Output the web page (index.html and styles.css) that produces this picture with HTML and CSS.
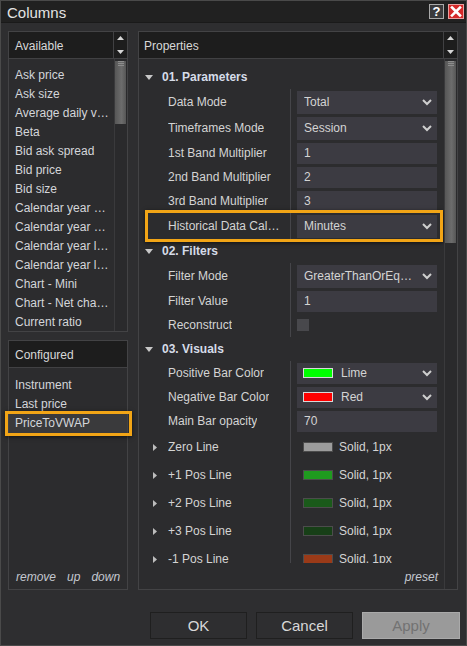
FILE: index.html
```html
<!DOCTYPE html>
<html lang="en">
<head>
  <meta charset="UTF-8">
  <title>Columns</title>
  <link rel="stylesheet" href="styles.css">
</head>
<body>
  <div class="window">
    <div class="titlebar">
      <span class="title">Columns</span>
      <div class="title-buttons">
        <span class="tb help">?</span>
        <span class="tb close">
          <svg width="14" height="13" viewBox="0 0 14 13"><path d="M3 2.5l8 8M11 2.5l-8 8" stroke="#fff" stroke-width="2.6" stroke-linecap="square"/></svg>
        </span>
      </div>
    </div>

    <div class="main">
      <div class="left">
        <div class="panel available">
          <div class="panel-head">
            <span>Available</span>
            <div class="head-arrows">
              <svg width="13" height="27" viewBox="0 0 13 27"><path d="M3 8h7l-3.5-4zM3 18h7l-3.5 4z" fill="#d6d6d6"/></svg>
            </div>
          </div>
          <div class="panel-body">
            <ul class="list">
              <li>Ask price</li>
              <li>Ask size</li>
              <li>Average daily volume</li>
              <li>Beta</li>
              <li>Bid ask spread</li>
              <li>Bid price</li>
              <li>Bid size</li>
              <li>Calendar year high</li>
              <li>Calendar year high date</li>
              <li>Calendar year low</li>
              <li>Calendar year low date</li>
              <li>Chart - Mini</li>
              <li>Chart - Net change</li>
              <li>Current ratio</li>
              <li>Daily high</li>
            </ul>
            <div class="vscroll"><div class="thumb short"></div></div>
          </div>
        </div>

        <div class="panel configured">
          <div class="panel-head"><span>Configured</span></div>
          <div class="panel-body column">
            <ul class="list">
              <li>Instrument</li>
              <li>Last price</li>
              <li class="selected">PriceToVWAP</li>
            </ul>
            <div class="panel-foot">
              <span>remove</span><span>up</span><span>down</span>
            </div>
          </div>
        </div>
      </div>

      <div class="panel properties">
        <div class="panel-head">
          <span>Properties</span>
          <div class="head-arrows">
            <svg width="13" height="27" viewBox="0 0 13 27"><path d="M3 8h7l-3.5-4zM3 18h7l-3.5 4z" fill="#d6d6d6"/></svg>
          </div>
        </div>
        <div class="panel-body">
          <div class="prop-main">
            <div class="grid">
              <div class="cat"><svg class="tri-down" width="8" height="5" viewBox="0 0 8 5"><path d="M0 0h8L4 5z"/></svg>01. Parameters</div>
              <div class="row tall"><div class="label"><span>Data Mode</span></div><div class="value"><div class="field"><span class="text">Total</span><svg class="chev" width="10" height="7" viewBox="0 0 10 7"><path d="M1 1l4 4 4-4"/></svg></div></div></div>
              <div class="row tall"><div class="label"><span>Timeframes Mode</span></div><div class="value"><div class="field"><span class="text">Session</span><svg class="chev" width="10" height="7" viewBox="0 0 10 7"><path d="M1 1l4 4 4-4"/></svg></div></div></div>
              <div class="row"><div class="label"><span>1st Band Multiplier</span></div><div class="value"><div class="field"><span class="text">1</span></div></div></div>
              <div class="row"><div class="label"><span>2nd Band Multiplier</span></div><div class="value"><div class="field"><span class="text">2</span></div></div></div>
              <div class="row"><div class="label"><span>3rd Band Multiplier</span></div><div class="value"><div class="field"><span class="text">3</span></div></div></div>
              <div class="row tall marked"><div class="label"><span>Historical Data Calculation</span></div><div class="value"><div class="field"><span class="text">Minutes</span><svg class="chev" width="10" height="7" viewBox="0 0 10 7"><path d="M1 1l4 4 4-4"/></svg></div></div></div>

              <div class="cat"><svg class="tri-down" width="8" height="5" viewBox="0 0 8 5"><path d="M0 0h8L4 5z"/></svg>02. Filters</div>
              <div class="row tall"><div class="label"><span>Filter Mode</span></div><div class="value"><div class="field"><span class="text">GreaterThanOrEqual</span><svg class="chev" width="10" height="7" viewBox="0 0 10 7"><path d="M1 1l4 4 4-4"/></svg></div></div></div>
              <div class="row"><div class="label"><span>Filter Value</span></div><div class="value"><div class="field"><span class="text">1</span></div></div></div>
              <div class="row"><div class="label"><span>Reconstruct</span></div><div class="value"><span class="check"></span></div></div>

              <div class="cat"><svg class="tri-down" width="8" height="5" viewBox="0 0 8 5"><path d="M0 0h8L4 5z"/></svg>03. Visuals</div>
              <div class="row"><div class="label"><span>Positive Bar Color</span></div><div class="value"><div class="field color"><span class="swatch" style="background:#00ff00"></span><span class="text">Lime</span><svg class="chev" width="10" height="7" viewBox="0 0 10 7"><path d="M1 1l4 4 4-4"/></svg></div></div></div>
              <div class="row"><div class="label"><span>Negative Bar Color</span></div><div class="value"><div class="field color"><span class="swatch" style="background:#ff0000"></span><span class="text">Red</span><svg class="chev" width="10" height="7" viewBox="0 0 10 7"><path d="M1 1l4 4 4-4"/></svg></div></div></div>
              <div class="row"><div class="label"><span>Main Bar opacity</span></div><div class="value"><div class="field"><span class="text">70</span></div></div></div>

              <div class="row line"><div class="label"><svg class="tri-right" width="4" height="7" viewBox="0 0 4 7"><path d="M0 0l4 3.5L0 7z"/></svg><span>Zero Line</span></div><div class="value"><span class="swatch" style="background:#9c9c9c"></span><span class="text">Solid, 1px</span></div></div>
              <div class="row line"><div class="label"><svg class="tri-right" width="4" height="7" viewBox="0 0 4 7"><path d="M0 0l4 3.5L0 7z"/></svg><span>+1 Pos Line</span></div><div class="value"><span class="swatch" style="background:#1f9a1f"></span><span class="text">Solid, 1px</span></div></div>
              <div class="row line"><div class="label"><svg class="tri-right" width="4" height="7" viewBox="0 0 4 7"><path d="M0 0l4 3.5L0 7z"/></svg><span>+2 Pos Line</span></div><div class="value"><span class="swatch" style="background:#1a5a1a"></span><span class="text">Solid, 1px</span></div></div>
              <div class="row line"><div class="label"><svg class="tri-right" width="4" height="7" viewBox="0 0 4 7"><path d="M0 0l4 3.5L0 7z"/></svg><span>+3 Pos Line</span></div><div class="value"><span class="swatch" style="background:#173f17"></span><span class="text">Solid, 1px</span></div></div>
              <div class="row line"><div class="label"><svg class="tri-right" width="4" height="7" viewBox="0 0 4 7"><path d="M0 0l4 3.5L0 7z"/></svg><span>-1 Pos Line</span></div><div class="value"><span class="swatch" style="background:#9a3a18"></span><span class="text">Solid, 1px</span></div></div>
            </div>
            <div class="prop-foot"><span>preset</span></div>
          </div>
          <div class="vscroll"><div class="thumb long"></div></div>
        </div>
      </div>
    </div>

    <div class="buttons">
      <button class="btn">OK</button>
      <button class="btn">Cancel</button>
      <button class="btn disabled">Apply</button>
    </div>
  </div>
</body>
</html>
```

FILE: styles.css
```css
* {
  box-sizing: border-box;
}

body {
  margin: 0;
  background-color: #2e2e30;
  font-family: "Liberation Sans", Arial, sans-serif;
  font-size: 12px;
  color: #d2d2d2;
}

.window {
  width: 467px;
  height: 646px;
  border: 1px solid #4a4a4a;
  background-color: #2e2e30;
  display: flex;
  flex-direction: column;
}

/* title bar */
.titlebar {
  height: 22px;
  background-color: #212121;
  border-bottom: 1px solid #1a1a1a;
  display: flex;
  align-items: center;
  padding: 1px 2px 0 6px;
}

.title {
  font-size: 15px;
  color: #e4e4e4;
}

.title-buttons {
  margin-left: auto;
  margin-top: -1px;
  display: flex;
  gap: 4px;
}

.tb {
  width: 15px;
  height: 15px;
  display: flex;
  align-items: center;
  justify-content: center;
  border: 1px solid #a9a9a9;
}

.help {
  background-color: #3a3a3c;
  color: #fff;
  font-weight: bold;
  font-size: 13px;
}

.close {
  width: 16px;
  background-color: #d42a2a;
  border-color: #e8a0a0;
}

/* main area */
.main {
  display: flex;
  gap: 10px;
  padding: 8px 8px 0 7px;
}

.left {
  width: 120px;
  display: flex;
  flex-direction: column;
  gap: 8px;
}

.panel {
  border: 1px solid #434345;
  background-color: #2c2c2e;
  display: flex;
  flex-direction: column;
}

.available {
  height: 301px;
}

.configured {
  height: 250px;
}

.properties {
  width: 320px;
  height: 559px;
}

.panel-head {
  height: 27px;
  flex: none;
  background-color: #1d1d1d;
  border-bottom: 1px solid #414143;
  display: flex;
  align-items: center;
  padding-left: 6px;
  color: #d8d8d8;
}

.panel-head > span {
  padding-top: 1px;
}

.properties .panel-head {
  padding-left: 5px;
}

.head-arrows {
  margin-left: auto;
  width: 14px;
  height: 100%;
  border-left: 1px solid #414143;
}

.head-arrows svg {
  display: block;
}

.panel-body {
  flex: 1;
  display: flex;
  min-height: 0;
}

.panel-body.column {
  flex-direction: column;
}

.list {
  list-style: none;
  margin: 0;
  padding: 7px 0 0 0;
  flex: 1;
  min-width: 0;
  overflow: hidden;
}

.configured .list {
  padding-top: 8px;
  overflow: visible;
}

.list li {
  height: 19px;
  line-height: 19px;
  padding: 0 4px 0 6px;
  white-space: nowrap;
  overflow: hidden;
  text-overflow: ellipsis;
  color: #d4d6da;
}

.list li.selected {
  position: relative;
  overflow: visible;
  background-color: #3a3a3c;
}

.list li.selected::after {
  content: "";
  position: absolute;
  left: -4px;
  right: -5px;
  top: -3px;
  bottom: -3px;
  border: 3px solid #f2a516;
  box-shadow: 0 1px 4px rgba(0, 0, 0, 0.6);
}

.panel-foot {
  height: 26px;
  display: flex;
  align-items: center;
  padding: 1px 0 0 7px;
  font-style: italic;
  color: #c4c8d0;
}

.panel-foot span {
  margin-right: 11px;
}

/* scrollbars */
.vscroll {
  width: 13px;
  flex: none;
  border-left: 1px solid #3a3a3c;
  background-color: #2a2a2c;
  padding-top: 1px;
}

.thumb {
  margin-right: 1px;
  background: linear-gradient(to right, #575757, #6c6c6c 60%, #565656);
}

.thumb::before {
  content: "";
  display: block;
  height: 5px;
  margin: 1px 2px 0 3px;
  background: repeating-linear-gradient(to bottom, #8c8c8c 0 1px, transparent 1px 2px);
}

.thumb.short {
  height: 63px;
}

.thumb.long {
  height: 182px;
}

/* property grid */
.prop-main {
  flex: 1;
  min-width: 0;
  display: flex;
  flex-direction: column;
}

.grid {
  height: 504px;
  flex: none;
  overflow: hidden;
  padding-top: 6px;
}

.cat {
  height: 24px;
  display: flex;
  align-items: center;
  padding-left: 6px;
  font-weight: bold;
  color: #d6dce8;
}

.tri-down {
  fill: #c8c8c8;
  margin-right: 9px;
}

.row {
  height: 24px;
  display: flex;
}

.row.tall {
  height: 26px;
}

.row.line {
  height: 28px;
}

.row.marked {
  position: relative;
}

.row.marked::after {
  content: "";
  position: absolute;
  left: 6px;
  right: 1px;
  top: -3px;
  bottom: -3px;
  border: 3px solid #f2a516;
  box-shadow: 0 1px 4px rgba(0, 0, 0, 0.6);
}

.label {
  width: 152px;
  flex: none;
  padding: 0 7px 0 29px;
  border-right: 1px solid #454549;
  display: flex;
  align-items: center;
  white-space: nowrap;
  overflow: hidden;
  color: #d4d4d4;
}

.label span {
  overflow: hidden;
  text-overflow: ellipsis;
}

.row.line .label {
  padding-left: 14px;
}

.tri-right {
  flex: none;
  fill: #bdbdbd;
  margin-right: 11px;
}

.value {
  flex: 1;
  min-width: 0;
  display: flex;
  align-items: center;
  padding-left: 6px;
}

.field {
  width: 140px;
  height: 21px;
  background-color: #3c3b42;
  padding-left: 7px;
  display: flex;
  align-items: center;
  color: #d4d4d4;
}

.row.tall .field {
  height: 23px;
}

.field.color {
  padding-left: 6px;
}

.field .text {
  flex: 1;
  min-width: 0;
  white-space: nowrap;
  overflow: hidden;
  text-overflow: ellipsis;
}

.chev {
  flex: none;
  margin: 0 5px 0 8px;
  fill: none;
  stroke: #cfcfcf;
  stroke-width: 2;
}

.swatch {
  width: 30px;
  height: 10px;
  flex: none;
  border: 1px solid #d8d8d8;
  margin-right: 8px;
}

.row.line .swatch {
  border-color: #4c4c4c;
  margin: 0 6px 0 6px;
}

.row.line .text {
  color: #d4d4d4;
  white-space: nowrap;
}

.check {
  width: 12px;
  height: 12px;
  background-color: #48484c;
}

.prop-foot {
  flex: 1;
  display: flex;
  align-items: center;
  justify-content: flex-end;
  padding: 1px 6px 0 0;
  font-style: italic;
  color: #c4c8d0;
}

/* bottom buttons */
.buttons {
  margin-top: 22px;
  display: flex;
  justify-content: flex-end;
  gap: 9px;
  padding-right: 6px;
}

.btn {
  width: 97px;
  height: 27px;
  border: 1px solid #1f1f1f;
  background-color: #2e2e30;
  color: #d8d8d8;
  font-family: "Liberation Sans", Arial, sans-serif;
  font-size: 15px;
  padding: 0;
}

.btn.disabled {
  width: 98px;
  background-color: #9a9a9a;
  border-color: #aaaaaa;
  color: #727272;
}
```
